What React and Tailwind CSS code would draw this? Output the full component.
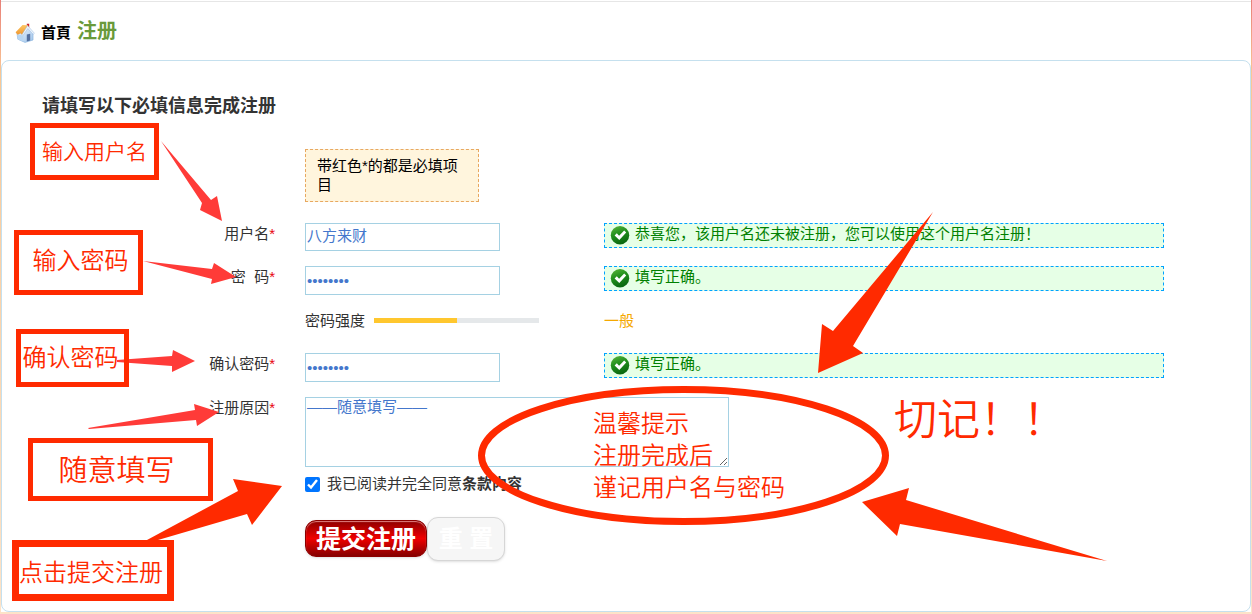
const CJK = "font-['Liberation_Sans','Noto_Sans_CJK_SC',sans-serif]";

function HomeIcon() {
  return (
    <svg viewBox="0 0 20 20" className="size-5 shrink-0" aria-hidden="true">
      <defs>
        <linearGradient id="wall" x1="0" y1="0" x2="1" y2="1">
          <stop offset="0" stopColor="#f4f9fe" />
          <stop offset="1" stopColor="#9fc4ea" />
        </linearGradient>
        <linearGradient id="roof" x1="0" y1="0" x2="0" y2="1">
          <stop offset="0" stopColor="#fdc765" />
          <stop offset="1" stopColor="#f0962e" />
        </linearGradient>
      </defs>
      <path d="M2 10 L7 10 L12.800 4 L18 10 V17 L10 19.400 L2.800 16.200 Z" fill="url(#wall)" stroke="#8db6e0" strokeWidth=".7" />
      <path d="M2.500 11 L8.500 13 V18.600 L3 16.200 Z" fill="#b8d6f2" />
      <path d="M11.800 0.800 h2.400 v4.500 h-2.400 z" fill="#cc2a2e" />
      <path d="M0.600 9.200 L7.500 2 L12.800 2.200 L13 4 L7.300 12 L5.600 10.200 L2.600 11.800 Z" fill="url(#roof)" />
      <path d="M12.600 2.600 L19.400 10.200 L18.300 11.400 L12.900 5.600 L8 12.400 L7 11.400 Z" fill="#eef5fc" stroke="#86acd8" strokeWidth=".4" />
      <path d="M11.800 11.500 L15.200 10.800 V17.600 L11.800 18.600 Z" fill="#5470a0" />
    </svg>
  );
}

function CheckIcon() {
  return (
    <svg viewBox="0 0 20 20" className="mt-px size-5 shrink-0" aria-hidden="true">
      <defs>
        <linearGradient id="ball" x1="0" y1="0" x2="0.400" y2="1">
          <stop offset="0" stopColor="#5cb83c" />
          <stop offset=".5" stopColor="#22901c" />
          <stop offset="1" stopColor="#0a6a10" />
        </linearGradient>
      </defs>
      <circle cx="10" cy="10.300" r="9.200" fill="url(#ball)" />
      <path d="M4.600 10.600 L6.800 8.300 L9.100 10.700 L14.200 5.400 L16.200 7.400 L9.300 15 Z" fill="#fff" />
    </svg>
  );
}

function Label({ htmlFor, children }) {
  return (
    <label htmlFor={htmlFor} className="w-[273px] shrink-0 text-right leading-[22px]">
      {children}
      <span className="text-red-600">*</span>
    </label>
  );
}

function Success({ children }) {
  return (
    <p className="flex h-[25px] w-[560px] items-start gap-[5px] border border-dashed border-[#00a2ff] bg-[#e6ffe6] pl-[5px] text-[#008000]">
      <CheckIcon />
      <span className="leading-5">{children}</span>
    </p>
  );
}

const field =
  "block w-[195px] border border-[#a5d1e3] bg-white px-[1px] text-[15px] text-[#4477cc] outline-none";

function Row({ tall, children }) {
  return <div className={`flex items-start ${tall ? "h-11" : "h-[43px]"}`}>{children}</div>;
}

function Callout({ className, children }) {
  return (
    <div className={`absolute flex items-center justify-center whitespace-nowrap border-[#ff2a00] ${className}`}>
      {children}
    </div>
  );
}

export default function App() {
  return (
    <div className={`relative min-h-screen overflow-hidden bg-linear-to-b from-[#e88078] from-0% via-[#f9c795] via-12% to-[#fde3c8] px-px text-[15px] text-[#333] ${CJK}`}>
      <div className="bg-white pt-px">
        <header className="flex h-[59px] items-center gap-[6px] border-t border-[#e6e6e6] pt-1 pl-[14px]">
          <HomeIcon />
          <a href="#home" className="font-bold text-black">首頁</a>
          <h1 className="pb-1 text-xl font-semibold text-[#6a9a3a]">注册</h1>
        </header>
        <main className="rounded-lg border border-[#c5e0ee] pt-[33px] pb-[50px]">
          <h2 className="pl-10 text-lg leading-6 font-semibold">请填写以下必填信息完成注册</h2>
          <form onSubmit={(e) => e.preventDefault()}>
            <div className="mt-[31px] ml-[303px] w-[174px] border border-dashed border-[#e8a860] bg-[#fff5dd] px-[11px] pt-[6px] pb-[7px] leading-[19px] text-black">
              带红色*的都是必填项目
            </div>
            <div className="mt-[21px]">
              <Row>
                <Label htmlFor="user">用户名</Label>
                <div className="ml-[30px] w-[299px]"><input id="user" defaultValue="八方来财" className={`h-7 pb-[5px] ${field}`} /></div>
                <Success>恭喜您，该用户名还未被注册，您可以使用这个用户名注册！</Success>
              </Row>
              <Row>
                <Label htmlFor="pass">密&nbsp;&nbsp;码</Label>
                <div className="ml-[30px] w-[299px]"><input id="pass" type="password" defaultValue="password" className={`h-[29px] ${field}`} /></div>
                <Success>填写正确。</Success>
              </Row>
              <Row tall>
                <div className="ml-[303px] flex h-[23px] w-[299px] items-center gap-[9px]">
                  <span className="leading-5">密码强度</span>
                  <div className="h-[5px] w-[165px] bg-[#e5e8ea]"><div className="h-full w-1/2 bg-[#ffc72e]" /></div>
                </div>
                <span className="leading-6 text-[#f5a800]">一般</span>
              </Row>
              <Row tall>
                <Label htmlFor="pass2">确认密码</Label>
                <div className="ml-[30px] w-[299px]"><input id="pass2" type="password" defaultValue="password" className={`h-[29px] ${field}`} /></div>
                <Success>填写正确。</Success>
              </Row>
              <div className="flex items-start">
                <Label htmlFor="reason">注册原因</Label>
                <textarea id="reason" defaultValue="——随意填写——" className="ml-[30px] h-[70px] w-[424px] border border-[#a5d1e3] bg-white px-[1px] leading-[18px] text-[#4477cc] outline-none" />
              </div>
            </div>
            <label className="mt-[7px] ml-[303px] flex h-5 w-fit items-center gap-[7px]">
              <input type="checkbox" defaultChecked className="size-[15px] accent-[#0075ff]" />
              <span>我已阅读并完全同意<b>条款内容</b></span>
            </label>
            <div className="mt-[23px] ml-[303px] flex items-start">
              <button type="submit" className="mt-[3px] h-[37px] w-[122px] rounded-[11px] border border-[#8c0000] bg-linear-to-b from-[#8f0000] via-[#f00000] to-[#860000] text-[25px] leading-8 font-bold whitespace-nowrap text-white shadow inset-shadow-[0_1px_1px_#e08080]">提交注册</button>
              <button type="reset" className="h-11 w-[78px] rounded-[11px] border border-[#d6d6d6] bg-[#f6f6f6] text-2xl leading-8 font-bold text-white shadow">重 置</button>
            </div>
          </form>
        </main>
      </div>

      <div className="pointer-events-none absolute top-0 left-0 h-[614px] w-[1252px] font-[350] text-[#ff2a00]">
        <svg viewBox="0 0 1252 614" className="absolute inset-0 size-full" aria-hidden="true">
          <g fill="#ff3b38">
            <path d="M161 141 L211 200 L217 196 L222 221 L200 210 L202 203 Z" />
            <path d="M143 261 L212 269 L214 263 L236 277 L211 284 L212 279 Z" />
            <path d="M117 360 L172 356 L173 350 L195 361 L172 372 L172 366 L117 362 Z" />
            <path d="M88 428 L195 410 L194 404 L219 412 L197 426 L196 420 L89 429 Z" />
          </g>
          <g fill="#ff2a00">
            <path d="M147 540 L238 491 L233 479 L282 486 L252 525 L247 514 L158 540 Z" />
            <path d="M933 212 L833 331 L822 324 L818 373 L863 353 L853 346 Z" />
            <path d="M1107 561 L906 500 L909 488 L862 502 L897 536 L900 524 Z" />
          </g>
          <ellipse cx="683.500" cy="455.500" rx="202" ry="66" fill="none" stroke="#ff2a00" strokeWidth="7" />
        </svg>
        <Callout className="top-[123px] left-[30px] h-[57px] w-[129px] border-5 text-[21px]">输入用户名</Callout>
        <Callout className="top-[230px] left-[14px] h-[65px] w-[129px] border-5 pb-1 pl-1 text-2xl">输入密码</Callout>
        <Callout className="top-[329px] left-[16px] h-[58px] w-[113px] border-5 pr-1 text-2xl">确认密码</Callout>
        <Callout className="top-[438px] left-[28px] h-[63px] w-[185px] border-5 pt-1 pr-2 text-[29px]">随意填写</Callout>
        <Callout className="top-[540px] left-[12px] h-[61px] w-[162px] border-7 pt-1 pr-1 text-2xl">点击提交注册</Callout>
        <p className="absolute top-[408px] left-[593px] text-2xl leading-8 whitespace-nowrap">温馨提示<br />注册完成后<br />谨记用户名与密码</p>
        <p className="absolute top-[392px] left-[894px] text-[43px] leading-[56px] whitespace-nowrap">切记！！</p>
      </div>
    </div>
  );
}
